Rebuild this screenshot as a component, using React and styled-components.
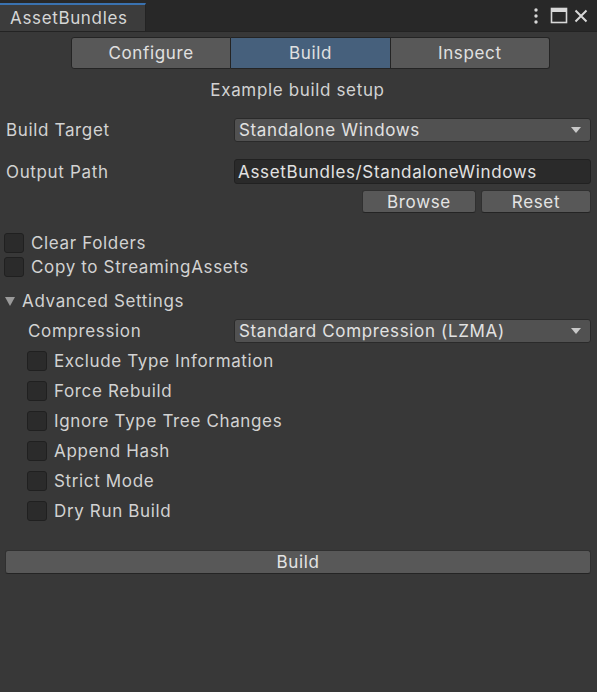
import React, { useState } from "react";
import styled, { createGlobalStyle } from "styled-components";

const GlobalStyle = createGlobalStyle`
  html, body {
    margin: 0;
    padding: 0;
    background: #383838;
  }
  body {
    font-family: Inter, "Noto Sans", sans-serif;
    color: #d2d2d2;
    letter-spacing: 0.65px;
  }
`;

const Window = styled.div`
  width: 597px;
  height: 692px;
  background: #383838;
  display: flex;
  flex-direction: column;
  overflow: hidden;
`;

const Header = styled.div`
  height: 31px;
  background: #282828;
  border-bottom: 1px solid #232323;
  display: flex;
  align-items: flex-end;
  justify-content: space-between;
`;

const Tab = styled.div`
  width: 146px;
  height: 28px;
  background: #3c3c3c;
  border-top: 2px solid #3a72b0;
  border-right: 1px solid #232323;
  box-sizing: border-box;
  display: flex;
  align-items: center;
  padding-left: 10px;
  font-size: 17px;
  color: #d6d6d6;
`;

const WindowIcons = styled.div`
  display: flex;
  align-items: center;
  height: 31px;
  padding-right: 9px;
  color: #d8d8d8;
`;

const Body = styled.div`
  padding: 0 6px 0 4px;
  display: flex;
  flex-direction: column;
`;

const Toolbar = styled.div`
  display: flex;
  margin: 5px 0 0 67px;
  width: 479px;
  height: 32px;
`;

const ToolButton = styled.button`
  flex: 1;
  border: 1px solid #242424;
  border-left-width: ${(p) => (p.$first ? "1px" : "0")};
  background: ${(p) => (p.$active ? "#46607c" : "#585858")};
  color: #e0e0e0;
  font-family: inherit;
  letter-spacing: inherit;
  font-size: 17px;
  padding: 0;
  border-radius: ${(p) =>
    p.$first ? "3px 0 0 3px" : p.$last ? "0 3px 3px 0" : "0"};
`;

const Caption = styled.div`
  text-align: center;
  font-size: 17px;
  margin-top: 9px;
  height: 24px;
  line-height: 24px;
`;

const Row = styled.div`
  display: flex;
  align-items: center;
  height: ${(p) => p.$h || 24}px;
  margin-top: ${(p) => p.$mt || 0}px;
  padding-left: ${(p) => p.$indent || 0}px;
`;

const Label = styled.div`
  font-size: 17px;
  color: #d2d2d2;
  flex: 0 0 auto;
  width: ${(p) => p.$w}px;
  padding-left: 2px;
`;

const Dropdown = styled.div`
  flex: 1;
  height: 24px;
  box-sizing: border-box;
  background: #515151;
  border: 1px solid #2a2a2a;
  border-radius: 3px;
  display: flex;
  align-items: center;
  justify-content: space-between;
  padding: 0 9px 0 4px;
  font-size: 17px;
  color: #e2e2e2;
`;

const Arrow = styled.span`
  width: 0;
  height: 0;
  border-left: 5px solid transparent;
  border-right: 5px solid transparent;
  border-top: 6px solid #c8c8c8;
`;

const TextField = styled.div`
  flex: 1;
  height: 25px;
  box-sizing: border-box;
  background: #2a2a2a;
  border: 1px solid #212121;
  border-radius: 3px;
  display: flex;
  align-items: center;
  padding-left: 3px;
  font-size: 17px;
  color: #e2e2e2;
`;

const ButtonRow = styled.div`
  display: flex;
  justify-content: flex-end;
  gap: 5px;
  margin-top: 6px;
`;

const Button = styled.button`
  width: ${(p) => (p.$w ? `${p.$w}px` : "auto")};
  flex: ${(p) => (p.$w ? "0 0 auto" : "1")};
  height: ${(p) => p.$h || 23}px;
  box-sizing: border-box;
  background: #585858;
  border: 1px solid #303030;
  border-bottom-color: #242424;
  border-radius: 3px;
  color: #e4e4e4;
  font-family: inherit;
  letter-spacing: inherit;
  font-size: 17px;
  padding: 0;
  line-height: 20px;
`;

const Check = styled.span`
  width: 20px;
  height: 20px;
  box-sizing: border-box;
  background: #2b2b2b;
  border: 1px solid #202020;
  border-radius: 3px;
  flex: 0 0 auto;
  margin-right: 7px;
`;

const CheckText = styled.span`
  font-size: 17px;
  color: #d2d2d2;
`;

const Foldout = styled.div`
  display: flex;
  align-items: center;
  height: 24px;
  margin-top: 10px;
  font-size: 17px;
  gap: 7px;
`;

const FoldArrow = styled.span`
  width: 0;
  height: 0;
  margin-left: 1px;
  border-left: 5px solid transparent;
  border-right: 5px solid transparent;
  border-top: 9px solid #9a9a9a;
`;

const advanced = [
  "Exclude Type Information",
  "Force Rebuild",
  "Ignore Type Tree Changes",
  "Append Hash",
  "Strict Mode",
  "Dry Run Build",
];

function CheckRow({ label, indent, h, mt }) {
  return (
    <Row $indent={indent} $h={h} $mt={mt}>
      <Check />
      <CheckText>{label}</CheckText>
    </Row>
  );
}

export default function App() {
  const [tab, setTab] = useState("Build");
  const tabs = ["Configure", "Build", "Inspect"];

  return (
    <Window>
      <GlobalStyle />
      <Header>
        <Tab>AssetBundles</Tab>
        <WindowIcons>
          <svg width="10" height="18" viewBox="0 0 10 18" style={{ marginRight: 9 }}>
            <circle cx="5" cy="3" r="1.7" fill="currentColor" />
            <circle cx="5" cy="9" r="1.7" fill="currentColor" />
            <circle cx="5" cy="15" r="1.7" fill="currentColor" />
          </svg>
          <svg width="18" height="18" viewBox="0 0 18 18" style={{ marginRight: 6 }}>
            <rect x="1.5" y="1.5" width="15" height="14" fill="none" stroke="currentColor" strokeWidth="1.6" />
            <rect x="1.5" y="1.5" width="15" height="3.5" fill="currentColor" />
          </svg>
          <svg width="14" height="18" viewBox="0 0 14 18">
            <path d="M1.5 3.5 L12.5 14.5 M12.5 3.5 L1.5 14.5" stroke="currentColor" strokeWidth="2" />
          </svg>
        </WindowIcons>
      </Header>
      <Body>
        <Toolbar>
          {tabs.map((t, i) => (
            <ToolButton
              key={t}
              $first={i === 0}
              $last={i === tabs.length - 1}
              $active={tab === t}
              onClick={() => setTab(t)}
            >
              {t}
            </ToolButton>
          ))}
        </Toolbar>
        <Caption>Example build setup</Caption>
        <Row $mt={16}>
          <Label $w={228}>Build Target</Label>
          <Dropdown>
            Standalone Windows
            <Arrow />
          </Dropdown>
        </Row>
        <Row $mt={17} $h={25}>
          <Label $w={228}>Output Path</Label>
          <TextField>AssetBundles/StandaloneWindows</TextField>
        </Row>
        <ButtonRow>
          <Button $w={114}>Browse</Button>
          <Button $w={110}>Reset</Button>
        </ButtonRow>
        <CheckRow label="Clear Folders" mt={18} />
        <CheckRow label="Copy to StreamingAssets" />
        <Foldout>
          <FoldArrow />
          Advanced Settings
        </Foldout>
        <Row $mt={6} $h={24} $indent={22}>
          <Label $w={206}>Compression</Label>
          <Dropdown>
            Standard Compression (LZMA)
            <Arrow />
          </Dropdown>
        </Row>
        {advanced.map((a, i) => (
          <CheckRow key={a} label={a} indent={23} h={30} mt={i === 0 ? 3 : 0} />
        ))}
        <Row $mt={24} $h={24}>
          <Button $h={24} style={{ marginLeft: 1 }}>Build</Button>
        </Row>
      </Body>
    </Window>
  );
}
